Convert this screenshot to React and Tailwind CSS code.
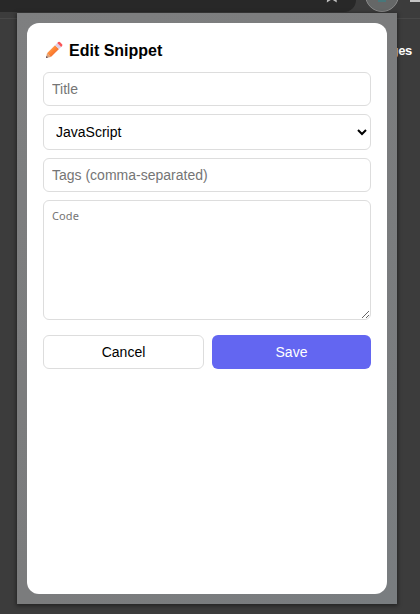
import React from 'react';

const field =
  'block w-full rounded-md border border-[#dddddd] bg-white text-sm text-black outline-none placeholder:text-[#757575]';

function Pencil() {
  return (
    <svg className="h-[18px] w-[18px] shrink-0" viewBox="0 0 18 18" aria-hidden="true">
      <defs>
        <linearGradient id="wood" x1="0" y1="0" x2="1" y2="1">
          <stop offset="0.25" stopColor="#f9a05a" />
          <stop offset="0.5" stopColor="#ff8330" />
          <stop offset="0.8" stopColor="#e8683c" />
        </linearGradient>
      </defs>
      <path d="M1 17 L2 12.2 L5.9 16 Z" fill="#d9a27c" />
      <path d="M1 17 L1.5 15.1 L2.9 16.5 Z" fill="#48384c" />
      <path d="M2 12.2 L10 4.2 L14 8.1 L5.9 16 Z" fill="url(#wood)" />
      <path d="M10 4.2 L12.2 2 L16.2 5.9 L14 8.1 Z" fill="#dccde5" />
      <path d="M12.2 2 L13.3 1 Q14.1 .3 14.9 1 L17.1 3.2 Q17.8 4 17.1 4.9 L16.2 5.9 Z" fill="#fa5557" />
    </svg>
  );
}

function BrowserBackdrop() {
  return (
    <div className="flex h-full flex-col">
      <div className="flex h-3 justify-end overflow-hidden bg-[#3c3c3c]">
        <div className="flex h-3 flex-1 justify-end rounded-br-[20px] bg-[#282828] pr-[18px]">
          <svg className="h-3 w-3" viewBox="0 0 12 12" fill="none" stroke="#bdbdbd" strokeWidth="1.4">
            <path d="M2 -4 L1.6 1.2 L5.8 -1.5 L10 1.2 L9.6 -4" />
          </svg>
        </div>
        <div className="-mt-[21px] ml-[9px] h-[33px] w-[34px] shrink-0 overflow-hidden rounded-b-full border border-[#8a8a8a] bg-[#656767]">
          <div className="mx-auto mt-5 h-[2px] w-2 bg-[#48777a]" />
        </div>
        <div className="ml-[11px] h-[2px] w-[10px] shrink-0 bg-[#c5c5c5]" />
      </div>
      <div className="h-[7px] border-b border-[#484848] bg-[#3c3c3c]" />
      <div className="flex-1 bg-[#3c3c3c] pr-2 pt-6 text-right text-[13px] font-bold leading-4 tracking-[-0.3px] text-white">
        Pages
      </div>
    </div>
  );
}

export default function App() {
  return (
    <div className="relative h-[614px] w-[420px] overflow-hidden bg-[#3c3c3c] font-['Liberation_Sans',Arial,sans-serif]">
      <BrowserBackdrop />
      <div className="absolute left-[17px] top-[13px] h-[591px] w-[380px] bg-linear-to-br from-[#7e7f80] via-[#7b7c7d] to-[#797d80] p-[10px] shadow-[0_1px_4px_1px_rgba(0,0,0,0.4)]">
        <div className="flex h-full flex-col rounded-xl bg-white px-4 pt-[18px]">
          <h2 className="flex h-[19px] items-center text-base font-bold leading-[19px] text-black">
            <span className="-mt-[2px] ml-[2px] mr-[6px] flex"><Pencil /></span>
            Edit Snippet
          </h2>
          <div className="mt-3 flex flex-col gap-2">
            <input className={`${field} h-[34px] px-2`} placeholder="Title" />
            <select className={`${field} h-9 px-2`} defaultValue="JavaScript">
              <option>JavaScript</option>
            </select>
            <input className={`${field} h-[34px] px-2`} placeholder="Tags (comma-separated)" />
            <textarea
              className="block h-[120px] w-full resize rounded-md border border-[#dddddd] bg-white px-2 pb-2 pt-[7px] font-['Noto_Sans',sans-serif] text-[11px] leading-[15px] tracking-[0.1px] outline-none placeholder:text-[#757575]"
              placeholder="Code"
            />
          </div>
          <div className="mt-[15px] flex gap-2">
            <button className="h-[34px] w-[161px] rounded-md border border-[#dddddd] bg-white text-sm text-black">
              Cancel
            </button>
            <button className="h-[34px] flex-1 rounded-md bg-[#6366f1] text-sm text-white">Save</button>
          </div>
        </div>
      </div>
    </div>
  );
}
